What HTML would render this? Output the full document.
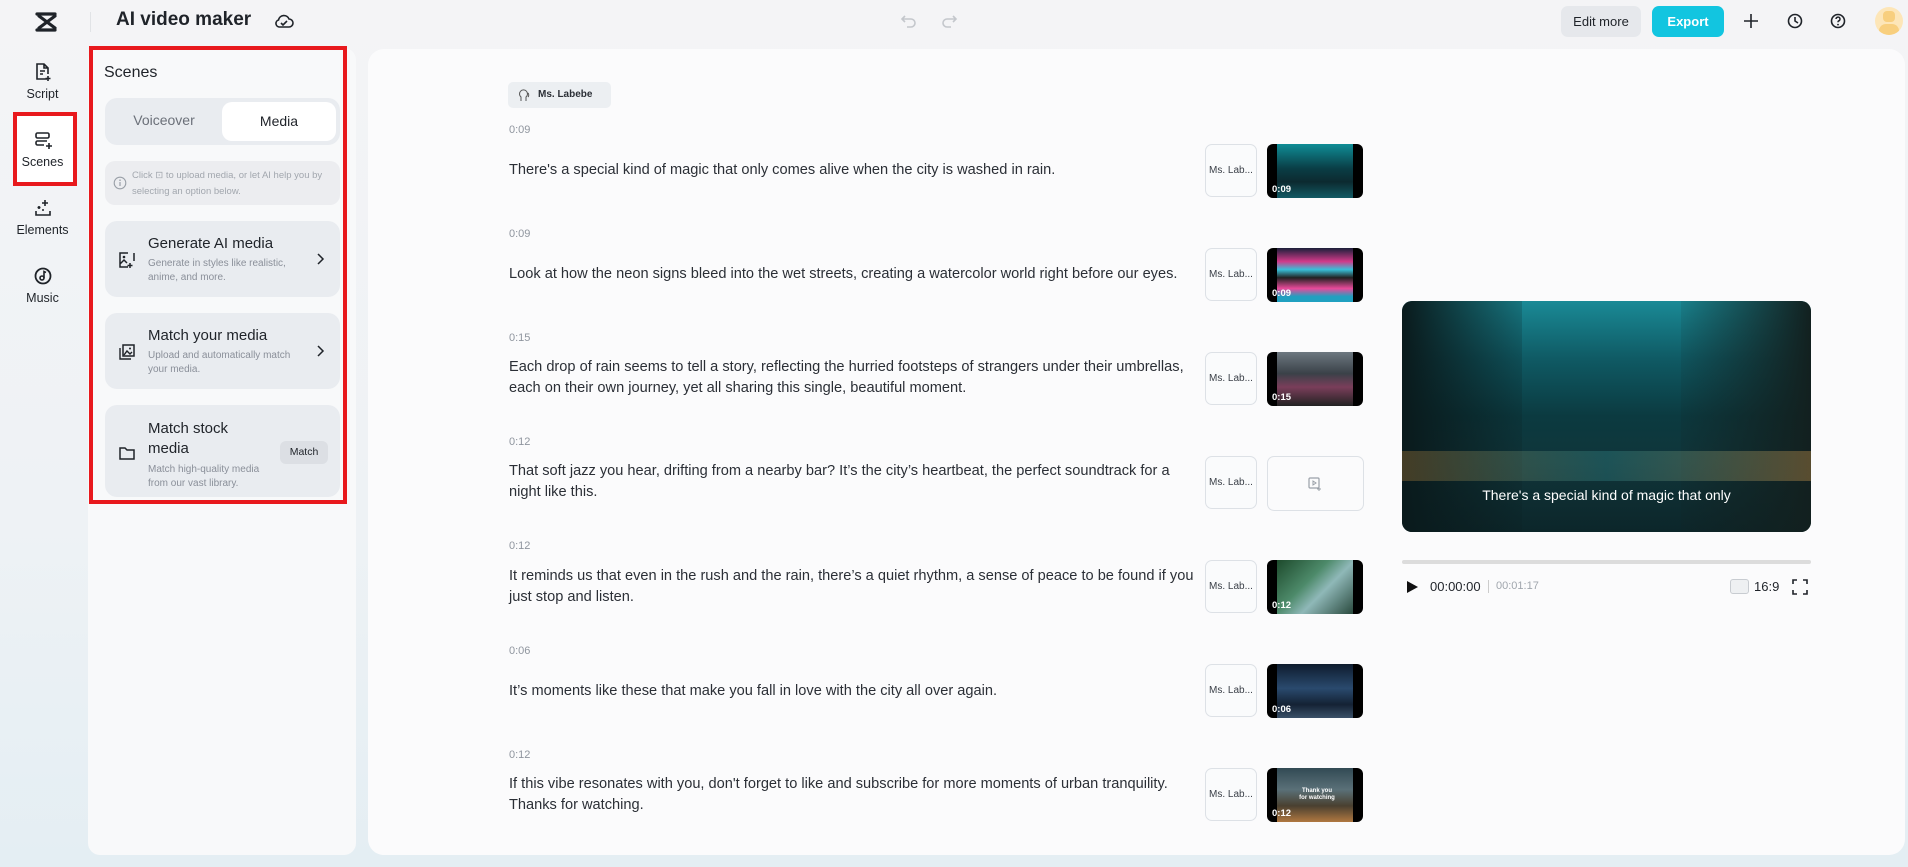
<!DOCTYPE html>
<html><head><meta charset="utf-8">
<style>
*{box-sizing:border-box;margin:0;padding:0}
body{width:1908px;height:867px;overflow:hidden;font-family:"Liberation Sans",sans-serif;background:linear-gradient(180deg,#f4f4f6 0%,#eef2f5 60%,#e4eef3 100%);position:relative;color:#1f2329}
.abs{position:absolute}
.nav{position:absolute;left:0;width:85px;text-align:center;font-size:12.5px;color:#1f2329}
.nav svg{display:block;margin:0 auto 5px}
.card{position:absolute;left:105px;width:235px;background:#e9ecf0;border-radius:12px}
.card .t{position:absolute;left:43px;font-size:15px;color:#1f2329}
.card .d{position:absolute;left:43px;font-size:10px;color:#8a8f99;line-height:14px}
.time{position:absolute;left:509px;font-size:11px;color:#8f959e}
.txt{position:absolute;left:509px;width:700px;font-size:14.6px;line-height:21px;color:#2b2f36;white-space:nowrap}
.ms{position:absolute;left:1205px;width:52px;height:53px;border:1px solid #dde1e6;border-radius:7px;background:#fafbfc;font-size:10px;color:#3a3f47;text-align:center;line-height:51px}
.th{position:absolute;left:1267px;width:96px;height:54px;border-radius:6px;overflow:hidden;background:#000}
.th span{position:absolute;left:5px;bottom:3px;color:#fff;font-size:9.5px;font-weight:bold}
.th i{position:absolute;left:10px;right:10px;top:0;bottom:0}
</style></head><body>
<svg class="abs" style="left:35px;top:12px" width="24" height="20" viewBox="0 0 24 20"><path d="M2 2h18M2 18h18M4 4l16 12M20 4L4 16" stroke="#1f2329" stroke-width="3.2" fill="none" stroke-linecap="round"/></svg>
<div class="abs" style="left:90px;top:12px;width:1px;height:20px;background:#e1e3e6"></div>
<div class="abs" style="left:116px;top:9px;font-size:19px;font-weight:bold;color:#1f2329">AI video maker</div>
<svg class="abs" style="left:274px;top:12px" width="20" height="18" viewBox="0 0 20 18"><path d="M5 15h10a4 4 0 0 0 0-8 5.5 5.5 0 0 0-10.5 1A3.6 3.6 0 0 0 5 15z" stroke="#1f2329" stroke-width="1.6" fill="none"/><path d="M7 11l2 2 4-4" stroke="#1f2329" stroke-width="1.6" fill="none"/></svg>
<svg class="abs" style="left:900px;top:13px" width="18" height="16" viewBox="0 0 18 16"><path d="M5 3L2 6l3 3M2 6h9a4 4 0 0 1 0 8H7" stroke="#c4c7cc" stroke-width="1.6" fill="none"/></svg>
<svg class="abs" style="left:940px;top:13px" width="18" height="16" viewBox="0 0 18 16"><path d="M13 3l3 3-3 3M16 6H7a4 4 0 0 0 0 8h4" stroke="#c4c7cc" stroke-width="1.6" fill="none"/></svg>
<div class="abs" style="left:1561px;top:6px;width:80px;height:31px;background:#e6e8ec;border-radius:7px;font-size:13px;line-height:31px;text-align:center;color:#1f2329">Edit more</div>
<div class="abs" style="left:1652px;top:6px;width:72px;height:31px;background:#12c5e0;border-radius:7px;font-size:13px;font-weight:bold;line-height:31px;text-align:center;color:#fff">Export</div>
<svg class="abs" style="left:1743px;top:13px" width="16" height="16"><path d="M8 1v14M1 8h14" stroke="#1f2329" stroke-width="1.6"/></svg>
<svg class="abs" style="left:1786px;top:12px" width="18" height="18" viewBox="0 0 18 18"><circle cx="9" cy="9" r="6.5" stroke="#1f2329" stroke-width="1.6" fill="none"/><path d="M9 5v4l3 2" stroke="#1f2329" stroke-width="1.6" fill="none"/></svg>
<svg class="abs" style="left:1829px;top:12px" width="18" height="18" viewBox="0 0 18 18"><circle cx="9" cy="9" r="6.5" stroke="#1f2329" stroke-width="1.6" fill="none"/><path d="M7 7a2 2 0 1 1 2.5 2c-.5.2-.5.6-.5 1.3" stroke="#1f2329" stroke-width="1.5" fill="none"/><circle cx="9" cy="12.6" r=".9" fill="#1f2329"/></svg>
<div class="abs" style="left:1875px;top:7px;width:28px;height:28px;border-radius:50%;background:#fde6b8;overflow:hidden"><div style="position:absolute;left:8px;top:4px;width:12px;height:11px;border-radius:4px;background:#f8cf7e"></div><div style="position:absolute;left:4px;top:17px;width:20px;height:14px;border-radius:10px;background:#f8cf7e"></div></div>

<div class="nav" style="top:62px"><svg width="20" height="20" viewBox="0 0 20 20"><path d="M14 17H4V2h7l4 4v6M11 2v4h4M7 9h5M7 12h3M15 14v5M12.5 16.5h5" stroke="#1f2329" stroke-width="1.6" fill="none"/></svg>Script</div>
<div class="abs" style="left:13px;top:112px;width:64px;height:74px;border:4px solid #e8191d;background:#fff"></div>
<div class="nav" style="top:130px"><svg width="20" height="20" viewBox="0 0 20 20"><rect x="3" y="3" width="13" height="5" rx="1.5" stroke="#1f2329" stroke-width="1.6" fill="none"/><path d="M11 15H4.5A1.5 1.5 0 0 1 3 13.5v-1A1.5 1.5 0 0 1 4.5 11H14M16 13v6M13 16h6" stroke="#1f2329" stroke-width="1.6" fill="none"/></svg>Scenes</div>
<div class="nav" style="top:198px"><svg width="20" height="20" viewBox="0 0 20 20"><path d="M3 13v4h14v-4M12 2v6M9 5h6M6 8v3M4.5 9.5h3" stroke="#1f2329" stroke-width="1.6" fill="none"/><circle cx="10" cy="12" r="1" fill="#1f2329"/></svg>Elements</div>
<div class="nav" style="top:266px"><svg width="20" height="20" viewBox="0 0 20 20"><circle cx="10" cy="10" r="7.5" stroke="#1f2329" stroke-width="1.8" fill="none"/><circle cx="9" cy="12" r="2" stroke="#1f2329" stroke-width="1.6" fill="none"/><path d="M11 12V5.5l2 1" stroke="#1f2329" stroke-width="1.6" fill="none"/></svg>Music</div>

<div class="abs" style="left:88px;top:48px;width:268px;height:807px;background:#f8f9fa;border-radius:12px"></div>
<div class="abs" style="left:89px;top:46px;width:258px;height:458px;border:4px solid #e8191d"></div>
<div class="abs" style="left:104px;top:64px;font-size:16px;color:#1f2329">Scenes</div>
<div class="abs" style="left:105px;top:98px;width:235px;height:47px;background:#e9ecf0;border-radius:12px"></div>
<div class="abs" style="left:105px;top:112px;width:118px;text-align:center;font-size:14px;color:#6b7079">Voiceover</div>
<div class="abs" style="left:222px;top:102px;width:114px;height:39px;background:#fff;border-radius:10px;text-align:center;line-height:39px;font-size:14px;color:#1f2329">Media</div>
<div class="abs" style="left:105px;top:161px;width:235px;height:44px;background:#ecedf0;border-radius:10px"></div>
<svg class="abs" style="left:113px;top:176px" width="14" height="14"><circle cx="7" cy="7" r="5.8" stroke="#9aa0a8" stroke-width="1.1" fill="none"/><path d="M7 6v4" stroke="#9aa0a8" stroke-width="1.2"/><circle cx="7" cy="4.2" r=".8" fill="#9aa0a8"/></svg>
<div class="abs" style="left:132px;top:168px;width:210px;font-size:9.5px;line-height:16px;color:#a2a7ae">Click ⊡ to upload media, or let AI help you by selecting an option below.</div>

<div class="card" style="top:221px;height:76px"><svg class="abs" style="left:13px;top:30px" width="18" height="18" viewBox="0 0 18 18"><path d="M10 2H2v14h8M16 2v8M2 13l4-4 3 3M12 12v5M9.5 14.5h5" stroke="#1f2329" stroke-width="1.5" fill="none"/><circle cx="6" cy="6" r="1.3" fill="#1f2329"/></svg><div class="t" style="top:14px">Generate AI media</div><div class="d" style="top:36px">Generate in styles like realistic,<br>anime, and more.</div><svg class="abs" style="left:210px;top:31px" width="10" height="14"><path d="M3 2l5 5-5 5" stroke="#1f2329" stroke-width="1.5" fill="none"/></svg></div>
<div class="card" style="top:313px;height:76px"><svg class="abs" style="left:13px;top:30px" width="18" height="18" viewBox="0 0 18 18"><rect x="5" y="2" width="11" height="11" stroke="#1f2329" stroke-width="1.5" fill="none"/><path d="M2 5v11h11M6 12l3-4 3 3 2-2" stroke="#1f2329" stroke-width="1.4" fill="none"/><circle cx="12" cy="5.5" r="1" fill="#1f2329"/></svg><div class="t" style="top:14px">Match your media</div><div class="d" style="top:36px">Upload and automatically match<br>your media.</div><svg class="abs" style="left:210px;top:31px" width="10" height="14"><path d="M3 2l5 5-5 5" stroke="#1f2329" stroke-width="1.5" fill="none"/></svg></div>
<div class="card" style="top:405px;height:92px"><svg class="abs" style="left:13px;top:40px" width="18" height="16" viewBox="0 0 18 16"><path d="M2 3h5l2 2h7v9H2z" stroke="#1f2329" stroke-width="1.5" fill="none"/></svg><div class="t" style="top:14px;line-height:20px">Match stock<br>media</div><div class="d" style="top:58px">Match high-quality media<br>from our vast library.</div><div class="abs" style="left:175px;top:36px;width:48px;height:23px;background:#dcdfe4;border-radius:6px;font-size:10.5px;line-height:23px;text-align:center;color:#1f2329">Match</div></div>

<div class="abs" style="left:368px;top:49px;width:1537px;height:806px;background:#fbfbfc;border-radius:16px"></div>
<div class="abs" style="left:508px;top:82px;width:103px;height:26px;background:#eceff2;border-radius:5px;font-size:10px;font-weight:bold;line-height:26px;padding-left:30px;color:#2b2f36">Ms. Labebe</div>
<svg class="abs" style="left:518px;top:88px" width="14" height="14"><path d="M3 13V9a4 4 0 1 1 5 0v4M10 5c1 1 1 3 0 4" stroke="#555" stroke-width="1" fill="none"/></svg>

<div class="time" style="top:124px">0:09</div>
<div class="txt" style="top:160px">There's a special kind of magic that only comes alive when the city is washed in rain.</div>
<div class="ms" style="top:144px">Ms. Lab...</div>
<div class="th" style="top:144px"><i style="background:linear-gradient(180deg,#0f8d96 0%,#0a3e46 45%,#0c2a30 70%,#125a64 100%)"></i><span>0:09</span></div>

<div class="time" style="top:228px">0:09</div>
<div class="txt" style="top:264px">Look at how the neon signs bleed into the wet streets, creating a watercolor world right before our eyes.</div>
<div class="ms" style="top:248px">Ms. Lab...</div>
<div class="th" style="top:248px"><i style="background:linear-gradient(180deg,#1b1f3a 0%,#d23a8a 25%,#38c0d8 40%,#222 55%,#e84a9a 75%,#20a0c0 90%)"></i><span>0:09</span></div>

<div class="time" style="top:332px">0:15</div>
<div class="txt" style="top:357px">Each drop of rain seems to tell a story, reflecting the hurried footsteps of strangers under their umbrellas,<br>each on their own journey, yet all sharing this single, beautiful moment.</div>
<div class="ms" style="top:352px">Ms. Lab...</div>
<div class="th" style="top:352px"><i style="background:linear-gradient(180deg,#6d7880 0%,#3a4148 40%,#7a3e5a 65%,#222 100%)"></i><span>0:15</span></div>

<div class="time" style="top:436px">0:12</div>
<div class="txt" style="top:461px">That soft jazz you hear, drifting from a nearby bar? It’s the city’s heartbeat, the perfect soundtrack for a<br>night like this.</div>
<div class="ms" style="top:456px">Ms. Lab...</div>
<div class="abs" style="left:1267px;top:456px;width:97px;height:55px;border:1px solid #dde1e6;border-radius:7px;background:#fbfbfc"></div>
<svg class="abs" style="left:1307px;top:476px" width="16" height="16"><rect x="2" y="2" width="10" height="10" rx="1" stroke="#9aa0a8" stroke-width="1.2" fill="none"/><path d="M6 5l3 2-3 2zM12 11v4M10 13h4" stroke="#9aa0a8" stroke-width="1" fill="none"/></svg>

<div class="time" style="top:540px">0:12</div>
<div class="txt" style="top:566px">It reminds us that even in the rush and the rain, there’s a quiet rhythm, a sense of peace to be found if you<br>just stop and listen.</div>
<div class="ms" style="top:560px">Ms. Lab...</div>
<div class="th" style="top:560px"><i style="background:linear-gradient(135deg,#1d4a2c 0%,#4d8a6a 40%,#8fb8b8 60%,#2a4a3e 100%)"></i><span>0:12</span></div>

<div class="time" style="top:645px">0:06</div>
<div class="txt" style="top:681px">It’s moments like these that make you fall in love with the city all over again.</div>
<div class="ms" style="top:664px">Ms. Lab...</div>
<div class="th" style="top:664px"><i style="background:linear-gradient(180deg,#0e1c2e 0%,#2a4a6e 45%,#142234 75%,#3a5068 100%)"></i><span>0:06</span></div>

<div class="time" style="top:749px">0:12</div>
<div class="txt" style="top:774px">If this vibe resonates with you, don't forget to like and subscribe for more moments of urban tranquility.<br>Thanks for watching.</div>
<div class="ms" style="top:768px">Ms. Lab...</div>
<div class="th" style="top:768px"><i style="background:linear-gradient(180deg,#324a54 0%,#5a7078 40%,#4a4030 70%,#b07840 100%)"></i><span>0:12</span><div style="position:absolute;left:30px;top:20px;width:40px;color:#fff;font-size:6px;font-weight:bold;text-align:center;line-height:7px">Thank you<br>for watching</div></div>

<div class="abs" style="left:1402px;top:301px;width:409px;height:231px;border-radius:10px;overflow:hidden;background:linear-gradient(180deg,#1a8a96 0%,#0f5a64 25%,#0b3a40 50%,#10353a 70%,#0c262a 100%)">
<div style="position:absolute;left:0;top:0;width:120px;height:231px;background:linear-gradient(90deg,#0a1a1c,rgba(10,30,32,0.2))"></div>
<div style="position:absolute;right:0;top:0;width:130px;height:231px;background:linear-gradient(270deg,#12201f,rgba(20,30,30,0.1))"></div>
<div style="position:absolute;left:0;right:0;top:150px;height:30px;background:linear-gradient(90deg,rgba(200,140,60,.3),rgba(80,200,200,.2),rgba(220,160,80,.35))"></div>
<div style="position:absolute;left:0;right:0;top:186px;text-align:center;color:#fff;font-size:14px">There's a special kind of magic that only</div>
</div>
<div class="abs" style="left:1402px;top:560px;width:409px;height:4px;background:#dcdcdc;border-radius:2px"></div>
<svg class="abs" style="left:1405px;top:580px" width="14" height="14"><path d="M2 1l11 6-11 6z" fill="#111"/></svg>
<div class="abs" style="left:1430px;top:579px;font-size:13px;color:#1f2329">00:00:00</div>
<div class="abs" style="left:1488px;top:580px;width:1px;height:13px;background:#ccc"></div>
<div class="abs" style="left:1496px;top:580px;font-size:11px;color:#a0a6ad">00:01:17</div>
<div class="abs" style="left:1730px;top:579px;width:19px;height:15px;border:1px solid #c8ccd1;border-radius:3px;background:#eef0f2"></div>
<div class="abs" style="left:1754px;top:579px;font-size:13px;color:#1f2329">16:9</div>
<svg class="abs" style="left:1792px;top:579px" width="16" height="16"><path d="M1 5V1h4M11 1h4v4M15 11v4h-4M5 15H1v-4" stroke="#1f2329" stroke-width="1.6" fill="none"/></svg>
</body></html>
